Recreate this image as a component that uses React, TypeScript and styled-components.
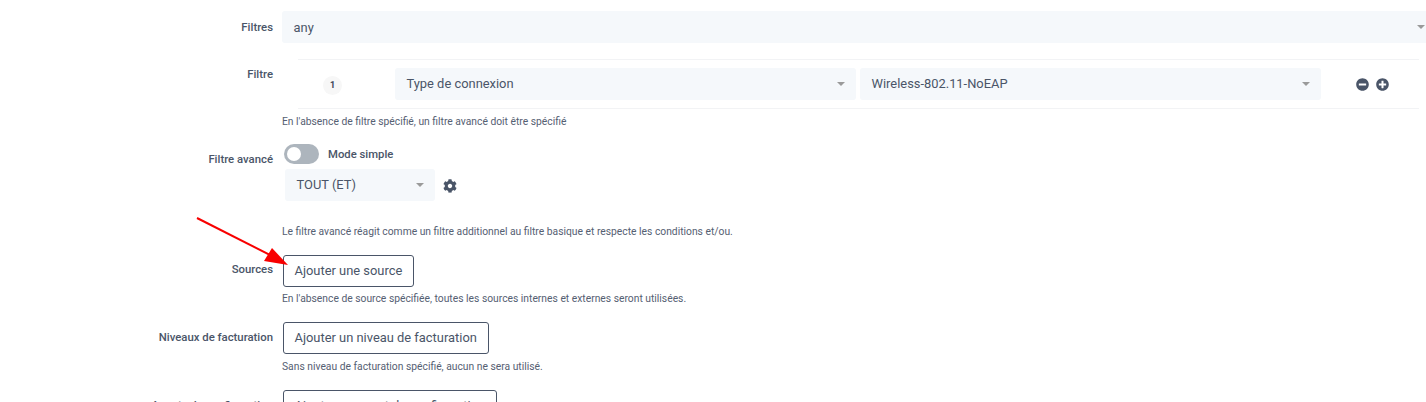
import React from "react";
import styled, { createGlobalStyle } from "styled-components";

const GlobalStyle = createGlobalStyle`
  html, body {
    margin: 0;
    padding: 0;
    background: #fff;
    overflow: hidden;
    height: 402px;
  }
  body {
    font-family: Roboto, "Liberation Sans", sans-serif;
    color: #4a5568;
  }
`;

const Page = styled.div`
  position: relative;
  width: 1426px;
  height: 402px;
  overflow: hidden;
  padding-top: 11px;
  box-sizing: border-box;
`;

const Row = styled.div<{ $gap?: number }>`
  display: grid;
  grid-template-columns: 273px 1154px;
  column-gap: 9px;
  margin-bottom: ${(p) => p.$gap ?? 0}px;
`;

const Label = styled.label<{ $top?: number }>`
  display: block;
  text-align: right;
  font-size: 11.35px;
  font-weight: 500;
  line-height: 16px;
  padding-top: ${(p) => p.$top ?? 7}px;
  color: #4a5568;
  white-space: nowrap;
`;

const Field = styled.div`
  display: flex;
  flex-direction: column;
  align-items: flex-start;
  min-width: 0;
`;

const Select = styled.div<{ $width: number }>`
  display: flex;
  align-items: center;
  justify-content: space-between;
  box-sizing: border-box;
  width: ${(p) => p.$width}px;
  height: 32px;
  padding: 0 11px 0 11.5px;
  background: #f5f8fb;
  border-radius: 3px;
  font-size: 12.9px;
  color: #4a5568;
  flex-shrink: 0;
`;

const SelectText = styled.span`
  margin-bottom: 2px;
`;

const Caret = styled.span`
  width: 0;
  height: 0;
  border-style: solid;
  border-width: 4px 4px 0 4px;
  border-color: #9a9a9a transparent transparent transparent;
`;

const FilterTable = styled.div`
  display: flex;
  align-items: center;
  box-sizing: border-box;
  width: 1121px;
  height: 50px;
  margin-left: 16px;
  border-top: 1px solid #f2f3f5;
  border-bottom: 1px solid #f2f3f5;
`;

const IndexCell = styled.div`
  display: flex;
  justify-content: flex-start;
  width: 97px;
  flex-shrink: 0;
  padding-left: 25px;
  box-sizing: border-box;
`;

const Badge = styled.span`
  display: flex;
  align-items: center;
  justify-content: center;
  width: 19px;
  height: 19px;
  margin-top: 2px;
  border-radius: 50%;
  background: #f7f7f7;
  font-size: 9px;
  font-weight: 700;
  color: #3d4757;
`;

const SelectPair = styled.div`
  display: flex;
  gap: 4px;
`;

const Actions = styled.div`
  display: flex;
  align-items: center;
  gap: 7px;
  margin-left: 35px;
  margin-top: 1px;
`;

const RoundIcon = styled.svg`
  display: block;
  width: 13px;
  height: 13px;
  fill: #4a5568;
`;

const Hint = styled.p<{ $top: number }>`
  margin: ${(p) => p.$top}px 0 0;
  font-size: 10.3px;
  line-height: 14px;
  color: #556072;
  white-space: nowrap;
`;

const ToggleRow = styled.div`
  display: flex;
  align-items: center;
  height: 20px;
  margin-left: 2px;
`;

const Toggle = styled.span`
  display: block;
  box-sizing: border-box;
  width: 35px;
  height: 20px;
  padding: 3px;
  border-radius: 10px;
  background: #adb5bd;
`;

const Knob = styled.span`
  display: block;
  width: 14px;
  height: 14px;
  border-radius: 50%;
  background: #fff;
`;

const ToggleText = styled.span`
  margin-left: 9px;
  font-size: 11.3px;
  font-weight: 500;
  color: #4a5568;
`;

const GroupRow = styled.div`
  display: flex;
  align-items: center;
  margin: 5px 0 0 3px;
`;

const GearIcon = styled.svg`
  display: block;
  width: 14px;
  height: 14px;
  margin: 2px 0 0 8px;
  fill: #4a5568;
`;

const OutlineButton = styled.button`
  box-sizing: border-box;
  height: 32px;
  margin-left: 1px;
  padding: 0 11px 2px 10.5px;
  background: #fff;
  border: 1px solid #4a5568;
  border-radius: 3px;
  font-family: inherit;
  font-size: 12.9px;
  color: #4a5568;
  white-space: nowrap;
`;

const ArrowMark = styled.svg`
  position: absolute;
  left: 190px;
  top: 210px;
  width: 110px;
  height: 65px;
`;

export default function App() {
  return (
    <Page>
      <GlobalStyle />

      <Row $gap={16}>
        <Label $top={8}>Filtres</Label>
        <Field>
          <Select $width={1154}>
            <span>any</span>
            <Caret />
          </Select>
        </Field>
      </Row>

      <Row $gap={15}>
        <Label>Filtre</Label>
        <Field>
          <FilterTable>
            <IndexCell>
              <Badge>1</Badge>
            </IndexCell>
            <SelectPair>
              <Select $width={461}>
                <SelectText>Type de connexion</SelectText>
                <Caret />
              </Select>
              <Select $width={461}>
                <SelectText>Wireless-802.11-NoEAP</SelectText>
                <Caret />
              </Select>
            </SelectPair>
            <Actions>
              <RoundIcon viewBox="0 0 512 512">
                <path d="M256 8C119 8 8 119 8 256s111 248 248 248 248-111 248-248S393 8 256 8zM124 296c-6.600 0-12-5.400-12-12v-56c0-6.600 5.400-12 12-12h264c6.600 0 12 5.400 12 12v56c0 6.600-5.400 12-12 12H124z" />
              </RoundIcon>
              <RoundIcon viewBox="0 0 512 512">
                <path d="M256 8C119 8 8 119 8 256s111 248 248 248 248-111 248-248S393 8 256 8zm144 276c0 6.600-5.400 12-12 12h-92v92c0 6.600-5.400 12-12 12h-56c-6.600 0-12-5.400-12-12v-92h-92c-6.600 0-12-5.400-12-12v-56c0-6.600 5.400-12 12-12h92v-92c0-6.600 5.400-12 12-12h56c6.600 0 12 5.400 12 12v92h92c6.600 0 12 5.400 12 12v56z" />
              </RoundIcon>
            </Actions>
          </FilterTable>
          <Hint $top={6}>En l'absence de filtre spécifié, un filtre avancé doit être spécifié</Hint>
        </Field>
      </Row>

      <Row $gap={16}>
        <Label>Filtre avancé</Label>
        <Field>
          <ToggleRow>
            <Toggle>
              <Knob />
            </Toggle>
            <ToggleText>Mode simple</ToggleText>
          </ToggleRow>
          <GroupRow>
            <Select $width={150}>
              <SelectText>TOUT (ET)</SelectText>
              <Caret />
            </Select>
            <GearIcon viewBox="0 0 512 512">
              <path d="M487.400 315.700l-42.600-24.600c4.300-23.200 4.300-47 0-70.200l42.600-24.600c4.900-2.800 7.100-8.600 5.500-14-11.100-35.600-30-67.800-54.700-94.600-3.800-4.100-10-5.100-14.800-2.300L380.800 110c-17.900-15.400-38.500-27.300-60.800-35.100V25.800c0-5.600-3.900-10.500-9.400-11.700-36.700-8.200-74.300-7.800-109.200 0-5.500 1.200-9.400 6.100-9.400 11.700V75c-22.200 7.900-42.800 19.800-60.800 35.100L88.700 85.500c-4.900-2.800-11-1.900-14.800 2.300-24.700 26.700-43.600 58.900-54.700 94.600-1.700 5.400.6 11.200 5.500 14L67.300 221c-4.300 23.200-4.300 47 0 70.200l-42.600 24.600c-4.900 2.800-7.100 8.600-5.500 14 11.100 35.600 30 67.800 54.700 94.600 3.800 4.100 10 5.100 14.800 2.300l42.600-24.600c17.900 15.400 38.500 27.300 60.800 35.100v49.200c0 5.600 3.900 10.500 9.400 11.700 36.700 8.200 74.300 7.800 109.200 0 5.500-1.200 9.400-6.100 9.400-11.700v-49.200c22.200-7.900 42.800-19.800 60.800-35.100l42.600 24.600c4.900 2.800 11 1.900 14.800-2.300 24.700-26.700 43.600-58.900 54.700-94.600 1.500-5.500-.7-11.300-5.600-14.100zM256 336c-44.100 0-80-35.900-80-80s35.900-80 80-80 80 35.900 80 80-35.900 80-80 80z" />
            </GearIcon>
          </GroupRow>
          <Hint $top={24}>Le filtre avancé réagit comme un filtre additionnel au filtre basique et respecte les conditions et/ou.</Hint>
        </Field>
      </Row>

      <Row $gap={16}>
        <Label $top={6}>Sources</Label>
        <Field>
          <OutlineButton>Ajouter une source</OutlineButton>
          <Hint $top={5}>En l'absence de source spécifiée, toutes les sources internes et externes seront utilisées.</Hint>
        </Field>
      </Row>

      <Row $gap={16}>
        <Label>Niveaux de facturation</Label>
        <Field>
          <OutlineButton>Ajouter un niveau de facturation</OutlineButton>
          <Hint $top={6}>Sans niveau de facturation spécifié, aucun ne sera utilisé.</Hint>
        </Field>
      </Row>

      <Row>
        <Label>Agents de configuration</Label>
        <Field>
          <OutlineButton>Ajouter un agent de configuration</OutlineButton>
        </Field>
      </Row>

      <ArrowMark viewBox="0 0 110 65">
        <line x1="7" y1="8" x2="84" y2="47" stroke="#f80000" strokeWidth="2" />
        <polygon points="98,55 74,51 82,38" fill="#f80000" />
      </ArrowMark>
    </Page>
  );
}
